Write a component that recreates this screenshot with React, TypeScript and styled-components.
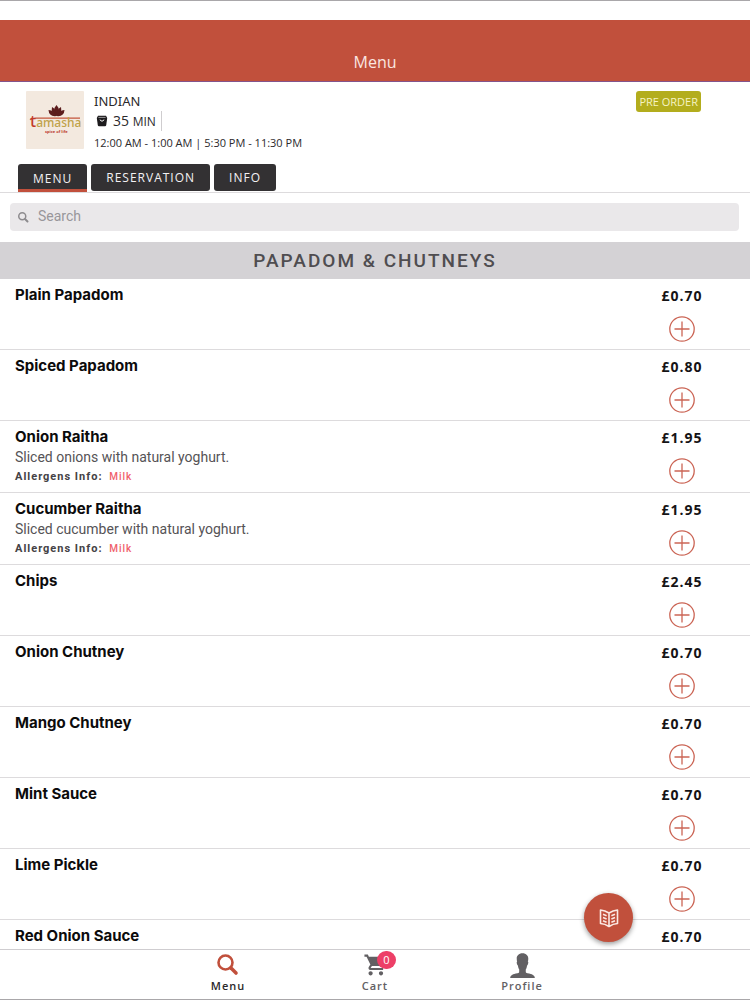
import React from "react";
import styled, { createGlobalStyle } from "styled-components";
import { IoMdCart, IoIosPerson } from "react-icons/io";

const sans = `"Open Sans", "Noto Sans", sans-serif`;
const noto = `"Noto Sans", "Open Sans", sans-serif`;
const roboto = `Roboto, "Liberation Sans", sans-serif`;
const inter = `Inter, "Liberation Sans", sans-serif`;
const brand = "#c1503c";

const GlobalStyle = createGlobalStyle`
  *, *::before, *::after { box-sizing: border-box; }
  body { margin: 0; background: #fff; color: #2b292b; font-family: ${sans}; }
  button, input { font: inherit; }
  h1, h2, h3, p { margin: 0; }
`;

const Screen = styled.div`
  display: flex;
  flex-direction: column;
  height: 100vh;
  border-top: 1px solid #a9a7aa;
  border-bottom: 1px solid #a9a7aa;
  background: #fff;
`;

const AppBar = styled.header`
  flex: none;
  display: flex;
  justify-content: center;
  align-items: flex-end;
  height: 62px;
  margin-top: 19px;
  padding-bottom: 7px;
  border-bottom: 1px solid #84548c;
  background: ${brand};
`;

const AppTitle = styled.h1`
  color: #fae6e0;
  font-size: 16px;
  font-weight: 400;
  line-height: 24px;
`;

const Restaurant = styled.section`
  flex: none;
  display: flex;
  align-items: flex-start;
  gap: 10px;
  padding: 9px 49px 0 26px;
`;

const Logo = styled.svg`
  flex: none;
  width: 58px;
  height: 58px;
`;

const Details = styled.div`
  flex: 1;
  min-width: 0;
`;

const Cuisine = styled.p`
  font-family: ${noto};
  font-size: 13px;
  line-height: 20px;
`;

const Delivery = styled.p`
  display: flex;
  align-items: center;
  gap: 5px;
  width: fit-content;
  height: 20px;
  padding: 0 5px 0 2px;
  border-right: 1px solid #cfcdcf;
  font-size: 14px;
  line-height: 20px;
`;

const Unit = styled.span`
  font-size: 12px;
`;

const Hours = styled.p`
  margin-top: 4px;
  font-size: 11px;
  line-height: 16px;
`;

const PreOrder = styled.button`
  height: 21px;
  padding: 0 3px;
  border: 0;
  border-radius: 3px;
  background: #b3ad1d;
  color: #f6f3c4;
  font-size: 11px;
  line-height: 20px;
`;

const Tabs = styled.nav`
  flex: none;
  display: flex;
  gap: 4px;
  height: 31px;
  margin-top: 11px;
  padding: 2px 18px;
  border-bottom: 1px solid #dddbdd;
`;

const Tab = styled.button<{ $active?: boolean }>`
  height: ${(p) => (p.$active ? 28 : 27)}px;
  padding: 0 15px;
  border: 0;
  border-radius: ${(p) => (p.$active ? "3px 3px 0 0" : "3px")};
  background: #333133;
  box-shadow: ${(p) => (p.$active ? `inset 0 -3px 0 ${brand}` : "none")};
  color: #f3f1f3;
  font-size: 12px;
  font-weight: 500;
  letter-spacing: 1px;
`;

const SearchBox = styled.label`
  flex: none;
  display: flex;
  align-items: center;
  gap: 9px;
  height: 28px;
  margin: 10px 11px 11px 10px;
  padding: 0 8px;
  border-radius: 4px;
  background: #eae8ea;
  color: #8d8b8e;
`;

const SearchInput = styled.input`
  flex: 1;
  min-width: 0;
  padding: 0 0 2px;
  border: 0;
  outline: 0;
  background: transparent;
  font-family: ${roboto};
  font-size: 14px;
  color: #444;
  &::placeholder { color: #98969a; opacity: 1; }
`;

const SectionTitle = styled.h2`
  flex: none;
  height: 37px;
  background: #d4d2d5;
  color: #4f4d50;
  font-family: ${roboto};
  font-size: 19px;
  font-weight: 500;
  line-height: 37px;
  letter-spacing: 2px;
  text-align: center;
`;

const Dishes = styled.ul`
  flex: 1;
  min-height: 0;
  margin: 0;
  padding: 0;
  list-style: none;
  overflow-y: auto;
  scrollbar-width: none;
`;

const Dish = styled.li`
  display: flex;
  min-height: 71px;
  padding: 5px 0 5px 15px;
  border-bottom: 1px solid #dddbdd;
`;

const DishText = styled.div`
  flex: 1;
  min-width: 0;
`;

const DishName = styled.h3`
  color: #0c0b0c;
  font-family: ${inter};
  font-size: 15px;
  font-weight: 700;
  line-height: 21px;
`;

const Description = styled.p`
  color: #555356;
  font-family: ${roboto};
  font-size: 14px;
  line-height: 20px;
`;

const Allergens = styled.p`
  color: #444245;
  font-family: ${roboto};
  font-size: 11px;
  font-weight: 700;
  line-height: 20px;
  letter-spacing: 1px;
`;

const Allergen = styled.span`
  margin-left: 3px;
  color: #f0616c;
  font-size: 10px;
  font-weight: 500;
  line-height: 1;
`;

const Buy = styled.div`
  flex: none;
  display: flex;
  flex-direction: column;
  align-items: center;
  width: 136px;
`;

const Price = styled.span`
  color: #151315;
  font-size: 14px;
  font-weight: 700;
  line-height: 24px;
  letter-spacing: 1px;
`;

const AddButton = styled.button`
  width: 26px;
  height: 26px;
  margin-top: 8px;
  padding: 0;
  border: 0;
  background: transparent;
  color: #cb6555;
  svg { display: block; }
`;

const BottomBar = styled.nav`
  flex: none;
  position: relative;
  display: flex;
  justify-content: center;
  height: 50px;
  border-top: 1px solid #cfcdd0;
  background: #fff;
`;

const NavLink = styled.a<{ $active?: boolean }>`
  display: flex;
  flex-direction: column;
  align-items: center;
  width: 147px;
  padding-top: 2px;
  color: ${(p) => (p.$active ? "#2b292b" : "#626063")};
  font-size: 11px;
  font-weight: 600;
  line-height: 16px;
  letter-spacing: 1px;
  text-decoration: none;
`;

const NavIcon = styled.span<{ $active?: boolean }>`
  position: relative;
  display: flex;
  align-items: center;
  justify-content: center;
  width: 26px;
  height: 26px;
  color: ${(p) => (p.$active ? brand : "inherit")};
  svg { flex: none; }
`;

const Badge = styled.span`
  position: absolute;
  top: -1px;
  left: 15px;
  width: 19px;
  height: 18px;
  border-radius: 9px;
  background: #ed3f67;
  color: #fff;
  font-size: 11px;
  font-weight: 400;
  line-height: 18px;
  letter-spacing: 0;
  text-align: center;
`;

const MenuFab = styled.button`
  position: absolute;
  right: 117px;
  bottom: 57px;
  display: flex;
  align-items: center;
  justify-content: center;
  width: 49px;
  height: 49px;
  padding: 0;
  border: 0;
  border-radius: 50%;
  background: ${brand};
  box-shadow: 0 2px 5px rgba(0, 0, 0, 0.4);
`;

const SearchIcon = ({ size, ring, handle }: { size: number; ring: number; handle: number }) => (
  <svg width={size} height={size} viewBox="0 0 22 22" fill="none" stroke="currentColor" aria-hidden="true">
    <circle cx="8.5" cy="8.5" r="7" strokeWidth={ring} />
    <path d="M14 14l5 5" strokeWidth={handle} strokeLinecap="round" />
  </svg>
);

const PlusIcon = () => (
  <svg width="26" height="26" viewBox="0 0 26 26" fill="none" stroke="currentColor" aria-hidden="true">
    <circle cx="13" cy="13" r="12.2" strokeWidth="1.3" />
    <path d="M13 5.5v15M5.5 13h15" strokeWidth="1.3" />
  </svg>
);

const BucketIcon = () => (
  <svg width="12" height="12" viewBox="0 0 12 12" aria-hidden="true">
    <path d="M2 .8h8l1.2 2.2-1 7.2q-.2 1-1.2 1H3q-1 0-1.2-1L.8 3z" fill="#1d1b1d" />
    <path d="M2.4 2.4h7.2" stroke="#bbb" strokeWidth=".8" />
    <path d="M3.8 4.8q2.2 3 4.4 0" fill="none" stroke="#fff" strokeWidth="1" />
  </svg>
);

const BookIcon = () => (
  <svg width="20" height="20" viewBox="0 0 20 20" fill="none" stroke="#fbe9e4" strokeWidth="1.6" strokeLinejoin="round" aria-hidden="true">
    <path d="M1.5 2q4.5 .5 8.5 3q4-2.500 8.500-3v13.500q-4.500 .3-8.500 3q-4-2.700-8.500-3zM10 5v13.500" />
    <path d="M4 6.300l3.600 1.500M4 9.500l3.600 1.500M4 12.700l3.600 1.500M16 6.300l-3.600 1.500M16 9.500l-3.600 1.500M16 12.700l-3.600 1.500" />
  </svg>
);

const TamashaLogo = () => (
  <Logo viewBox="0 0 58 58" role="img" aria-label="Tamasha, spice of life">
    <rect width="58" height="58" rx="1" fill="#f3e9df" />
    <g fill="#5c1d1d">
      <path d="M30.500 14q5 5.500 0 11q-5-5.500 0-11z" />
      <path d="M26 16q4 2 4.500 9q-6-2-4.500-9zM35 16q-4 2-4.500 9q6-2 4.500-9z" />
      <path d="M22.500 19q6 .5 8 6q-7.500 1-8-6zM38.500 19q-6 .5-8 6q7.500 1 8-6z" />
    </g>
    <path d="M4 29q2-2.500 8-1.800h42" fill="none" stroke="#c4553c" strokeWidth="1.200" />
    <text x="4" y="36" fill="#c0a24a" fontFamily="Noto Sans, sans-serif" fontSize="12" fontWeight="500">
      <tspan fill="#c23a2a" fontSize="16">t</tspan>amasha
    </text>
    <text x="19" y="42" fill="#bd4030" fontFamily="Noto Sans, sans-serif" fontSize="4" fontWeight="700">spice of life</text>
  </Logo>
);

type DishData = { name: string; price: string; description?: string; allergens?: string };

const dishes: DishData[] = [
  { name: "Plain Papadom", price: "£0.70" },
  { name: "Spiced Papadom", price: "£0.80" },
  { name: "Onion Raitha", price: "£1.95", description: "Sliced onions with natural yoghurt.", allergens: "Milk" },
  { name: "Cucumber Raitha", price: "£1.95", description: "Sliced cucumber with natural yoghurt.", allergens: "Milk" },
  { name: "Chips", price: "£2.45" },
  { name: "Onion Chutney", price: "£0.70" },
  { name: "Mango Chutney", price: "£0.70" },
  { name: "Mint Sauce", price: "£0.70" },
  { name: "Lime Pickle", price: "£0.70" },
  { name: "Red Onion Sauce", price: "£0.70" },
];

export default function App() {
  return (
    <Screen>
      <GlobalStyle />
      <AppBar>
        <AppTitle>Menu</AppTitle>
      </AppBar>
      <Restaurant>
        <TamashaLogo />
        <Details>
          <Cuisine>INDIAN</Cuisine>
          <Delivery>
            <BucketIcon />
            <span>35 <Unit>MIN</Unit></span>
          </Delivery>
          <Hours>12:00 AM - 1:00 AM | 5:30 PM - 11:30 PM</Hours>
        </Details>
        <PreOrder>PRE ORDER</PreOrder>
      </Restaurant>
      <Tabs>
        <Tab $active>MENU</Tab>
        <Tab>RESERVATION</Tab>
        <Tab>INFO</Tab>
      </Tabs>
      <SearchBox>
        <SearchIcon size={11} ring={3} handle={4} />
        <SearchInput type="search" placeholder="Search" aria-label="Search" />
      </SearchBox>
      <SectionTitle>PAPADOM &amp; CHUTNEYS</SectionTitle>
      <Dishes>
        {dishes.map((dish) => (
          <Dish key={dish.name}>
            <DishText>
              <DishName>{dish.name}</DishName>
              {dish.description && <Description>{dish.description}</Description>}
              {dish.allergens && (
                <Allergens>
                  Allergens Info: <Allergen>{dish.allergens}</Allergen>
                </Allergens>
              )}
            </DishText>
            <Buy>
              <Price>{dish.price}</Price>
              <AddButton aria-label={`Add ${dish.name}`}>
                <PlusIcon />
              </AddButton>
            </Buy>
          </Dish>
        ))}
      </Dishes>
      <BottomBar>
        <NavLink href="#menu" $active>
          <NavIcon $active>
            <SearchIcon size={22} ring={2.6} handle={3.6} />
          </NavIcon>
          Menu
        </NavLink>
        <NavLink href="#cart">
          <NavIcon>
            <IoMdCart size={26} aria-hidden="true" />
            <Badge>0</Badge>
          </NavIcon>
          Cart
        </NavLink>
        <NavLink href="#profile">
          <NavIcon>
            <IoIosPerson size={33} aria-hidden="true" />
          </NavIcon>
          Profile
        </NavLink>
        <MenuFab aria-label="Menu sections">
          <BookIcon />
        </MenuFab>
      </BottomBar>
    </Screen>
  );
}
